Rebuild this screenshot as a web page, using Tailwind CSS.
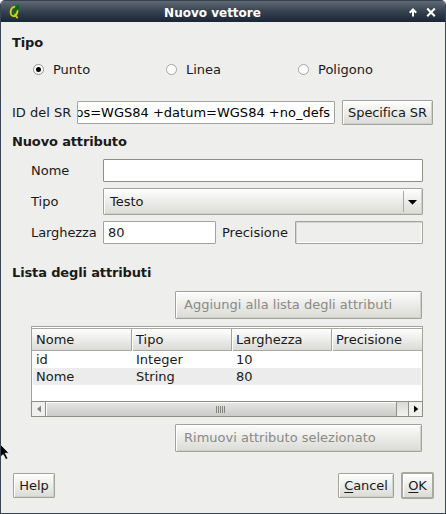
<!DOCTYPE html>
<html lang="it">
<head>
<meta charset="utf-8">
<title>Nuovo vettore</title>
<script src="https://cdn.jsdelivr.net/npm/@tailwindcss/browser@4"></script>
</head>
<body class="bg-white w-[446px] h-[514px] overflow-hidden">
<div class="relative w-[446px] h-[514px] flex flex-col overflow-hidden rounded-t-[5px] bg-[#eeeeec] border border-t-0 border-[#3a4656] font-['DejaVu_Sans',sans-serif] text-[13px] leading-[16px] text-[#1a1a1a] whitespace-nowrap">
  <header class="-mx-px h-[22px] shrink-0 flex items-center px-2 bg-linear-to-b from-[#606a76] via-[#36424f] to-[#1a2636] border-t border-[#36414e] text-white">
    <svg class="w-3.5 h-4 shrink-0" viewBox="0 0 14 16">
      <ellipse cx="6" cy="7.6" rx="3.3" ry="4.6" transform="rotate(10 6 7.6)" fill="none" stroke="#c9cf1c" stroke-width="2"/>
      <path d="M6 9L9.6 14.2" stroke="#c9cf1c" stroke-width="1.8"/>
      <path d="M4 10.5L6.2 5.5L7 2.5L11.2 .4L11 5L8.8 6.4L5.8 11Z" fill="#0b6a12"/>
    </svg>
    <h1 class="flex-1 pt-0.5 pr-[5px] text-center font-bold text-[12px]">Nuovo vettore</h1>
    <svg class="w-[30px] h-4 shrink-0" viewBox="0 0 30 16">
      <path d="M5 12.5V5.5M1.8 8.7L5 5.4L8.2 8.7" fill="none" stroke="#fff" stroke-width="2"/>
      <path d="M19.2 4.6L26.8 12.2M26.8 4.6L19.2 12.2" stroke="#fff" stroke-width="2.1"/>
    </svg>
  </header>

  <h2 class="mt-[13px] ml-[11px] h-4 font-bold tracking-[-0.14px]">Tipo</h2>
  <div class="mt-[11px] ml-8 h-4 flex items-center">
    <label class="w-[133px] flex items-center gap-[9px]"><span class="mb-px size-[11px] rounded-full border border-[#92928b] bg-white flex items-center justify-center"><span class="size-[5px] rounded-full bg-black"></span></span>Punto</label>
    <label class="w-[132px] flex items-center gap-[9px]"><span class="mb-px size-[11px] rounded-full border border-[#a6a69f] bg-white"></span>Linea</label>
    <label class="flex items-center gap-[9px]"><span class="mb-px size-[11px] rounded-full border border-[#a6a69f] bg-white"></span>Poligono</label>
  </div>

  <div class="mt-[22px] ml-[11px] h-[25px] flex items-center">
    <span class="w-[65px]">ID del SR</span>
    <div class="w-[258px] h-[23px] rounded-[1px] border border-[#a3a39b] bg-white overflow-hidden flex items-center justify-end pr-[4px] text-black">ps=WGS84 +datum=WGS84 +no_defs</div>
    <button class="ml-[7px] w-[91px] h-[25px] rounded-[1px] border border-[#a3a39b] bg-linear-to-b from-white to-[#dadad6] shadow-[inset_1px_1px_0_#fff,inset_-1px_-1px_0_#d0d0cb] tracking-[-0.1px]">Specifica SR</button>
  </div>

  <h2 class="mt-[9px] ml-[11px] h-4 font-bold tracking-[-0.14px]">Nuovo attributo</h2>
  <div class="mt-[9px] ml-[30px] h-[23px] flex items-center">
    <span class="w-[72px]">Nome</span>
    <div class="w-[320px] h-[23px] rounded-[1px] border border-[#8f8f88] bg-white"></div>
  </div>
  <div class="mt-[6px] ml-[30px] h-[27px] flex items-center">
    <span class="w-[72px]">Tipo</span>
    <div class="w-[320px] h-[27px] rounded-[1px] border border-[#a3a39b] bg-linear-to-b from-white to-[#dadad6] shadow-[inset_1px_1px_0_#fff,inset_-1px_-1px_0_#d0d0cb] flex items-center pl-[6px]">
      <span class="flex-1">Testo</span>
      <span class="w-px h-[21px] bg-[#a9a99f]"></span>
      <svg class="w-[18px] h-3" viewBox="0 0 18 12"><path d="M4 4H13L8.5 8.8Z" fill="#000"/></svg>
    </div>
  </div>
  <div class="mt-[6px] ml-[30px] h-[23px] flex items-center">
    <span class="w-[72px] tracking-[-0.08px]">Larghezza</span>
    <div class="w-[113px] h-[23px] rounded-[1px] border border-[#a3a39b] bg-white flex items-center pl-[4px]">80</div>
    <span class="ml-[6px] w-[73px]">Precisione</span>
    <div class="w-[128px] h-[23px] rounded-[1px] border border-[#a3a39b] bg-[#eeeeec] shadow-[inset_1px_1px_0_#d5d5d2,inset_-1px_-1px_0_#fff]"></div>
  </div>

  <h2 class="mt-[21px] ml-[11px] h-4 font-bold tracking-[-0.14px]">Lista degli attributi</h2>
  <button class="mt-[10px] ml-[174px] w-[247px] h-[28px] shrink-0 rounded-[1px] border border-[#a3a39b] bg-linear-to-b from-[#fcfcfb] to-[#dadad6] shadow-[inset_1px_1px_0_#fff,inset_-1px_-1px_0_#d0d0cb] text-[#8a8a86] text-left pl-[8px]">Aggiungi alla lista degli attributi</button>

  <section class="mt-[7px] ml-[30px] w-[392px] h-[91px] shrink-0 flex flex-col">
    <div class="h-[75px] flex flex-col rounded-t-[1px] border border-b-0 border-[#a3a39b] bg-white px-px pt-px">
      <div class="-mx-px h-[23px] grid grid-cols-[100px_100px_100px_90px] border-y border-[#a9a99f] bg-linear-to-b from-white to-[#dadad6] leading-[22px]">
        <span class="pl-[4px] border-r border-[#a3a39b]">Nome</span>
        <span class="pl-[4px] border-r border-[#a3a39b] shadow-[inset_1px_0_0_#fff]">Tipo</span>
        <span class="pl-[4px] border-r border-[#a3a39b] shadow-[inset_1px_0_0_#fff]">Larghezza</span>
        <span class="pl-[4px] shadow-[inset_1px_0_0_#fff]">Precisione</span>
      </div>
      <div class="h-[17px] grid grid-cols-[100px_100px_100px_85px] leading-[17px] pl-[3px]"><span>id</span><span>Integer</span><span>10</span></div>
      <div class="h-[17px] grid grid-cols-[100px_100px_100px_85px] leading-[17px] pl-[3px] bg-[#ececec]"><span>Nome</span><span>String</span><span>80</span></div>
    </div>
    <div class="h-4 flex bg-[#dededc] border-y border-[#8f8f88]">
      <span class="w-[15px] border-x border-[#8f8f88] bg-[#f0f0ee] flex items-center justify-center"><svg class="w-2 h-2" viewBox="0 0 8 8"><path d="M6 .5V7.5L2 4Z" fill="#85857f"/></svg></span>
      <span class="w-[351px] border-r border-[#8f8f88] bg-linear-to-b from-[#e6e6e4] to-[#cbcbc9] shadow-[inset_1px_1px_0_#fff] flex items-center justify-center gap-px pr-0.5">
        <i class="w-px h-[7px] bg-[#858580]"></i><i class="w-px h-[7px] bg-[#858580]"></i><i class="w-px h-[7px] bg-[#858580]"></i><i class="w-px h-[7px] bg-[#858580]"></i><i class="w-px h-[7px] bg-[#858580]"></i>
      </span>
      <span class="w-[11px] bg-linear-to-b from-[#d8d8d6] to-[#f2f2f0]"></span>
      <span class="w-[15px] border-x border-[#8f8f88] bg-[#f0f0ee] flex items-center justify-center"><svg class="w-2 h-2" viewBox="0 0 8 8"><path d="M2 .5V7.5L6.3 4Z" fill="#000"/></svg></span>
    </div>
  </section>

  <button class="mt-[7px] ml-[174px] w-[247px] h-[28px] shrink-0 rounded-[1px] border border-[#a3a39b] bg-linear-to-b from-[#fcfcfb] to-[#dadad6] shadow-[inset_1px_1px_0_#fff,inset_-1px_-1px_0_#d0d0cb] text-[#8a8a86] text-left pl-[8px]">Rimuovi attributo selezionato</button>

  <footer class="mt-[20px] ml-[12px] h-[27px] shrink-0 flex items-center">
    <button class="w-[42px] h-[25px] rounded-[1px] border border-[#a3a39b] bg-linear-to-b from-white to-[#dadad6] shadow-[inset_1px_1px_0_#fff,inset_-1px_-1px_0_#d0d0cb]">Help</button>
    <button class="ml-[283px] w-[56px] h-[25px] rounded-[1px] border border-[#a3a39b] bg-linear-to-b from-white to-[#dadad6] shadow-[inset_1px_1px_0_#fff,inset_-1px_-1px_0_#d0d0cb] tracking-[-0.1px]"><u class="underline-offset-2">C</u>ancel</button>
    <button class="ml-[7px] w-[33px] h-[27px] rounded-[2px] border-2 border-[#a9a99f] bg-linear-to-b from-white to-[#dadad6] shadow-[inset_1px_1px_0_#fff] tracking-[-0.2px]"><u class="underline-offset-2">O</u>K</button>
  </footer>

  <svg class="absolute -left-px top-[443px] w-[10px] h-[18px]" viewBox="0 0 10 18">
    <path d="M0 1L9 10.2H5.2L8 15.5L5.8 16.5L3.2 11.5L0 14.5Z" fill="#000" stroke="#fff" stroke-width=".7"/>
  </svg>
</div>
</body>
</html>
